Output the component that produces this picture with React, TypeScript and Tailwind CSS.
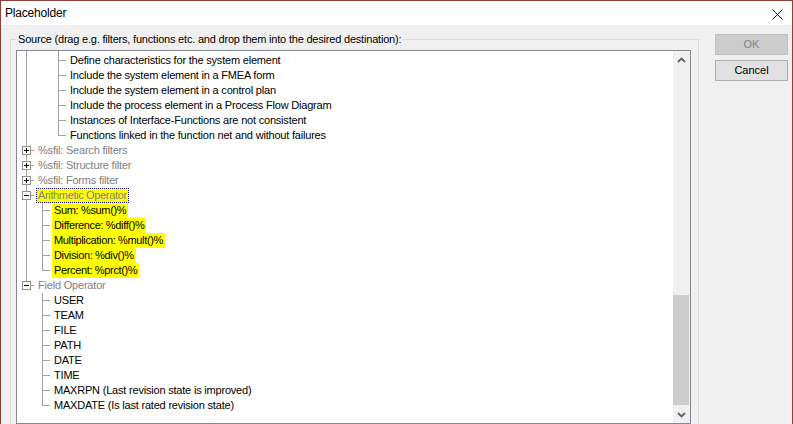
import React from 'react';

type Col = 'pipe' | 'blank';
type Own = 'tee' | 'elbow';

interface Row {
  guides: Col[];
  own: Own;
  expander?: 'plus' | 'minus';
  text: string;
  tone: 'black' | 'gray';
  hl?: boolean;
  focus?: boolean;
}

const FONT = { fontFamily: '"Liberation Sans", Arial, sans-serif' };
const LINE = '#a0a0a0';

const rows: Row[] = [
  { guides: ['pipe', 'blank'], own: 'tee', text: 'Define characteristics for the system element', tone: 'black' },
  { guides: ['pipe', 'blank'], own: 'tee', text: 'Include the system element in a FMEA form', tone: 'black' },
  { guides: ['pipe', 'blank'], own: 'tee', text: 'Include the system element in a control plan', tone: 'black' },
  { guides: ['pipe', 'blank'], own: 'tee', text: 'Include the process element in a Process Flow Diagram', tone: 'black' },
  { guides: ['pipe', 'blank'], own: 'tee', text: 'Instances of Interface-Functions are not consistent', tone: 'black' },
  { guides: ['pipe', 'blank'], own: 'elbow', text: 'Functions linked in the function net and without failures', tone: 'black' },
  { guides: [], own: 'tee', expander: 'plus', text: '%sfil: Search filters', tone: 'gray' },
  { guides: [], own: 'tee', expander: 'plus', text: '%sfil: Structure filter', tone: 'gray' },
  { guides: [], own: 'tee', expander: 'plus', text: '%sfil: Forms filter', tone: 'gray' },
  { guides: [], own: 'tee', expander: 'minus', text: 'Arithmetic Operator', tone: 'gray', hl: true, focus: true },
  { guides: ['pipe'], own: 'tee', text: 'Sum: %sum()%', tone: 'black', hl: true },
  { guides: ['pipe'], own: 'tee', text: 'Difference: %diff()%', tone: 'black', hl: true },
  { guides: ['pipe'], own: 'tee', text: 'Multiplication: %mult()%', tone: 'black', hl: true },
  { guides: ['pipe'], own: 'tee', text: 'Division: %div()%', tone: 'black', hl: true },
  { guides: ['pipe'], own: 'elbow', text: 'Percent: %prct()%', tone: 'black', hl: true },
  { guides: [], own: 'elbow', expander: 'minus', text: 'Field Operator', tone: 'gray' },
  { guides: ['blank'], own: 'tee', text: 'USER', tone: 'black' },
  { guides: ['blank'], own: 'tee', text: 'TEAM', tone: 'black' },
  { guides: ['blank'], own: 'tee', text: 'FILE', tone: 'black' },
  { guides: ['blank'], own: 'tee', text: 'PATH', tone: 'black' },
  { guides: ['blank'], own: 'tee', text: 'DATE', tone: 'black' },
  { guides: ['blank'], own: 'tee', text: 'TIME', tone: 'black' },
  { guides: ['blank'], own: 'tee', text: 'MAXRPN (Last revision state is improved)', tone: 'black' },
  { guides: ['blank'], own: 'elbow', text: 'MAXDATE (Is last rated revision state)', tone: 'black' },
];

function GuideCell({ col, h = 15 }: { col: Col; h?: number }) {
  return (
    <svg width="16" height={h} className="shrink-0 block" shapeRendering="crispEdges">
      {col === 'pipe' && <line x1="8.5" y1="0" x2="8.5" y2={h} stroke={LINE} />}
    </svg>
  );
}

function OwnCell({ own, expander }: { own: Own; expander?: 'plus' | 'minus' }) {
  return (
    <svg width="16" height="15" className="shrink-0 block" shapeRendering="crispEdges">
      <line x1="8.5" y1="0" x2="8.5" y2={own === 'tee' ? 15 : 8} stroke={LINE} />
      <line x1="8" y1="7.5" x2="16" y2="7.5" stroke={LINE} />
      {expander && (
        <>
          <rect x="4.5" y="3.5" width="8" height="8" fill="#fff" stroke="#919191" />
          <rect x="6" y="7" width="5" height="1" fill="#000" />
          {expander === 'plus' && <rect x="8" y="5" width="1" height="5" fill="#000" />}
        </>
      )}
    </svg>
  );
}

function TreeRow({ row }: { row: Row }) {
  return (
    <div className="flex h-[15px] items-stretch">
      {row.guides.map((g, i) => (
        <GuideCell key={i} col={g} />
      ))}
      <OwnCell own={row.own} expander={row.expander} />
      <span
        className={`ml-[2px] px-[2px] leading-[15px] whitespace-nowrap text-[11px] ${
          row.hl ? 'tracking-[-0.35px]' : 'tracking-[-0.2px]'
        } ${row.tone === 'gray' ? 'text-[#808080]' : 'text-black'} ${row.hl ? 'bg-[#ffff00]' : ''} ${
          row.focus ? 'outline-1 outline-dotted -outline-offset-1 outline-[#1c1c7a]' : ''
        }`}
      >
        {row.text}
      </span>
    </div>
  );
}

function Chevron({ up }: { up?: boolean }) {
  return (
    <svg width="9" height="6" viewBox="0 0 9 6" className="block">
      <path
        d={up ? 'M1 5 L4.5 1.5 L8 5' : 'M1 1 L4.5 4.5 L8 1'}
        fill="none"
        stroke="#606060"
        strokeWidth="1.8"
      />
    </svg>
  );
}

function Scrollbar() {
  return (
    <div className="w-[17px] shrink-0 flex flex-col bg-[#f0f0f0]">
      <div className="h-[17px] flex items-center justify-center">
        <Chevron up />
      </div>
      <div className="flex-1 flex flex-col">
        <div className="mt-[227px] h-[110px] w-[16px] bg-[#cdcdcd]" />
      </div>
      <div className="h-[17px] flex items-center justify-center">
        <Chevron />
      </div>
    </div>
  );
}

export default function App() {
  return (
    <div
      className="w-[793px] h-[424px] overflow-hidden flex flex-col border-x border-t border-[#8f3f36] bg-[#f0f0f0]"
      style={FONT}
    >
      <div className="h-[24px] shrink-0 bg-white flex items-center justify-between pl-[4px] pr-[9px]">
        <span className="text-[12px] tracking-[-0.2px] text-black">Placeholder</span>
        <svg width="11" height="11" viewBox="0 0 11 11" className="block mt-[2px]">
          <path d="M0.5 0.5 L10.5 10.5 M10.5 0.5 L0.5 10.5" stroke="#111" strokeWidth="1" fill="none" />
        </svg>
      </div>

      <div className="flex-1 flex items-start">
        <fieldset className="ml-[9px] mt-[7px] w-[689px] h-[420px] shrink-0 border border-[#dcdcdc] pl-[5px] pr-[7px] pt-[4px]">
          <legend className="ml-[1px] px-[1px] text-[11px] leading-[14px] tracking-[-0.2px] text-black">
            Source (drag e.g. filters, functions etc. and drop them into the desired destination):
          </legend>
          <div className="h-[374px] flex border border-[#828790] bg-white">
            <div className="flex-1 flex flex-col pl-[1px]">
              <div className="flex h-[2px]">
                <GuideCell col="pipe" h={2} />
                <GuideCell col="blank" h={2} />
                <GuideCell col="pipe" h={2} />
              </div>
              {rows.map((r, i) => (
                <TreeRow key={i} row={r} />
              ))}
            </div>
            <Scrollbar />
          </div>
        </fieldset>

        <div className="ml-[16px] mt-[9px] flex flex-col gap-[5px]">
          <div className="w-[73px] h-[21px] flex items-center justify-center border border-[#bfbfbf] bg-[#cccccc] text-[11px] text-[#838383]">
            OK
          </div>
          <div className="w-[73px] h-[21px] flex items-center justify-center border border-[#adadad] bg-[#e1e1e1] text-[11px] text-black">
            Cancel
          </div>
        </div>
      </div>
    </div>
  );
}
